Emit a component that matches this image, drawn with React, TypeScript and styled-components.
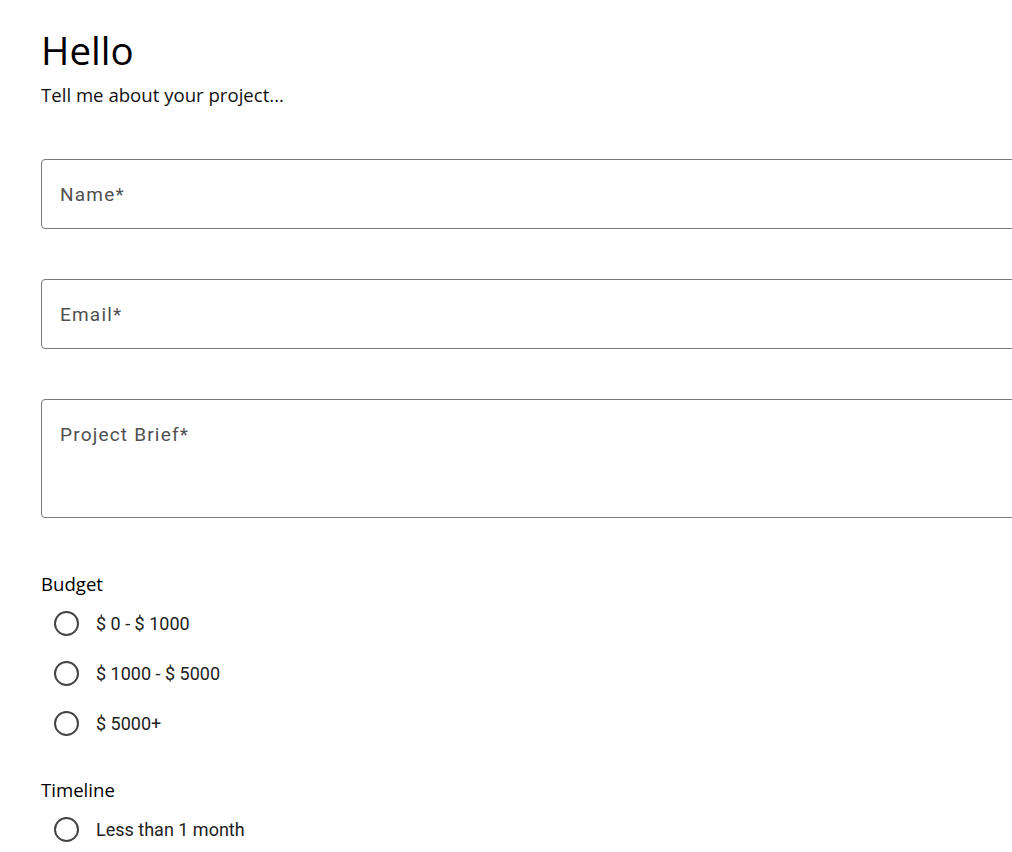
import React from "react";
import styled, { createGlobalStyle } from "styled-components";

const Global = createGlobalStyle`
  html, body { margin: 0; padding: 0; background: #fff; overflow: hidden; }
  * { box-sizing: border-box; }
`;

const Page = styled.main`
  padding: 22px 0 0 41px;
  width: 1100px;
  font-family: "Open Sans", "Noto Sans", sans-serif;
  color: #000;
`;

const Title = styled.h1`
  margin: 0;
  font-weight: 400;
  font-size: 38.5px;
  line-height: 56px;
`;

const Subtitle = styled.p`
  margin: 5px 0 0;
  font-size: 18.6px;
  line-height: 24px;
  color: #111;
`;

const Form = styled.form`
  margin-top: 52px;
  display: flex;
  flex-direction: column;
`;

const Field = styled.div<{ $tall?: boolean }>`
  width: 1060px;
  height: ${(p) => (p.$tall ? 119 : 70)}px;
  border: 1px solid #7a7a7a;
  border-radius: 4px;
  padding: ${(p) => (p.$tall ? "23px 18px" : "0 18px")};
  display: flex;
  align-items: ${(p) => (p.$tall ? "flex-start" : "center")};
  margin-bottom: 50px;
  font-family: Roboto, sans-serif;
  font-size: 19px;
  color: #505050;
  letter-spacing: 1.2px;
`;

const Group = styled.fieldset`
  border: 0;
  margin: 4px 0 26px;
  padding: 0;
`;

const Legend = styled.legend`
  padding: 0;
  margin-bottom: 2px;
  font-size: 18.6px;
  line-height: 24px;
`;

const Option = styled.label`
  display: flex;
  align-items: center;
  height: 50px;
  padding-left: 13px;
  font-family: Roboto, sans-serif;
  font-size: 18px;
  color: #222;
`;

const Circle = styled.span`
  width: 25px;
  height: 25px;
  border: 2px solid #444;
  border-radius: 50%;
  margin-right: 17px;
  flex: none;
`;

const budget = ["$ 0 - $ 1000", "$ 1000 - $ 5000", "$ 5000+"];
const timeline = ["Less than 1 month"];

export default function App() {
  return (
    <>
      <Global />
      <Page>
        <Title>Hello</Title>
        <Subtitle>Tell me about your project...</Subtitle>
        <Form>
          <Field>Name*</Field>
          <Field>Email*</Field>
          <Field $tall>Project Brief*</Field>
          <Group>
            <Legend>Budget</Legend>
            {budget.map((b) => (
              <Option key={b}>
                <Circle />
                {b}
              </Option>
            ))}
          </Group>
          <Group>
            <Legend>Timeline</Legend>
            {timeline.map((b) => (
              <Option key={b}>
                <Circle />
                {b}
              </Option>
            ))}
          </Group>
        </Form>
      </Page>
    </>
  );
}
